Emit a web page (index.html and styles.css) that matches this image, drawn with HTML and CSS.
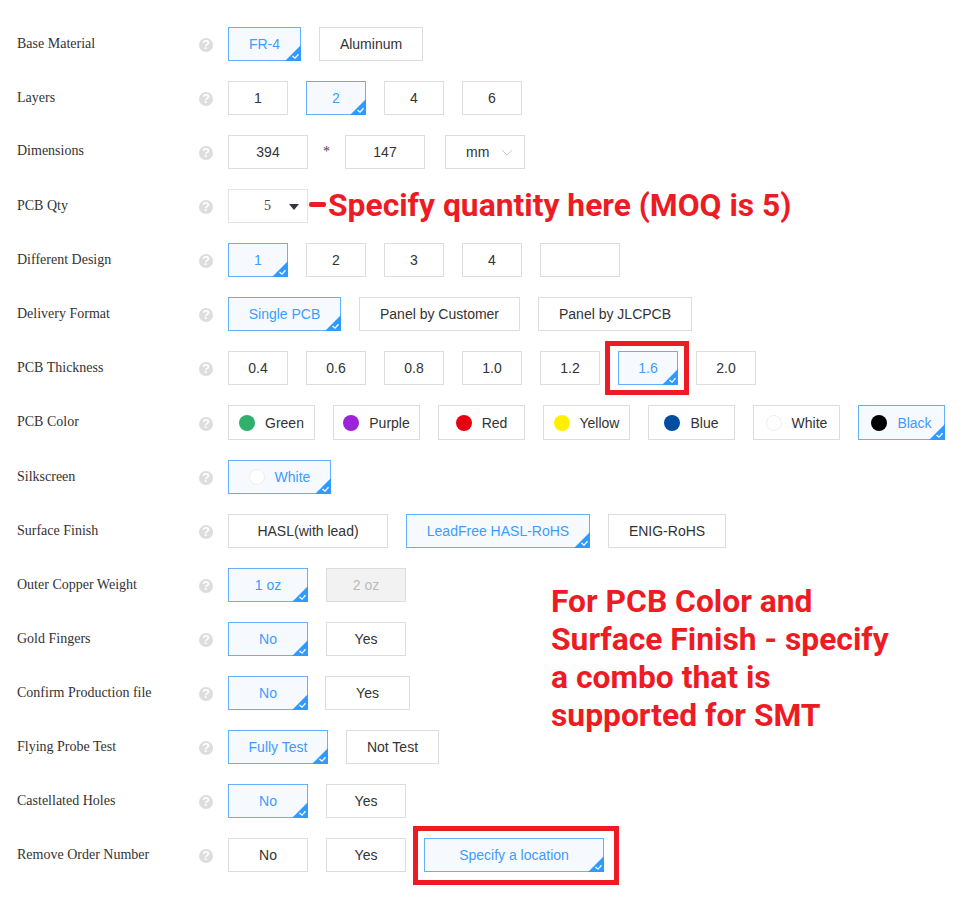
FILE: index.html
```
<!DOCTYPE html>
<html lang="en">
<head>
<meta charset="utf-8">
<title>PCB options</title>
<link rel="stylesheet" href="styles.css">
</head>
<body>
<svg class="defs" width="0" height="0" aria-hidden="true"><defs>
<symbol id="tick" viewBox="0 0 16 16"><polygon points="16,0 16,16 0,16" fill="#2f9bff"/><polyline points="7.5,11 10,13.2 13.5,9.2" fill="none" stroke="#fff" stroke-width="1.3"/></symbol>
</defs></svg>
<main class="form">
  <div class="row"><div class="label">Base Material</div><span class="help">?</span><div class="opts">
    <div class="opt on w73">FR-4<svg class="tick"><use href="#tick"/></svg></div><div class="opt w104">Aluminum</div></div></div>
  <div class="row"><div class="label">Layers</div><span class="help">?</span><div class="opts">
    <div class="opt w60">1</div><div class="opt on w60">2<svg class="tick"><use href="#tick"/></svg></div><div class="opt w60">4</div><div class="opt w60">6</div></div></div>
  <div class="row"><div class="label dim-label">Dimensions</div><span class="help">?</span><div class="opts dims">
    <div class="opt w80">394</div><span class="times">*</span><div class="opt w80">147</div>
    <div class="opt w80 unit">mm<svg class="chev" width="12" height="8" viewBox="0 0 12 8"><polyline points="1,1 6,6 11,1" fill="none" stroke="#c8ccd4" stroke-width="1"/></svg></div></div></div>
  <div class="row"><div class="label">PCB Qty</div><span class="help">?</span><div class="opts">
    <div class="opt w80 qty"><span class="qty-val">5</span><svg class="caret" width="10" height="6" viewBox="0 0 10 6"><polygon points="0,0 10,0 5,6" fill="#2f3542"/></svg></div></div></div>
  <div class="row"><div class="label">Different Design</div><span class="help">?</span><div class="opts">
    <div class="opt on w60">1<svg class="tick"><use href="#tick"/></svg></div><div class="opt w60">2</div><div class="opt w60">3</div><div class="opt w60">4</div><div class="opt w80"></div></div></div>
  <div class="row"><div class="label">Delivery Format</div><span class="help">?</span><div class="opts">
    <div class="opt on w113">Single PCB<svg class="tick"><use href="#tick"/></svg></div><div class="opt w161">Panel by Customer</div><div class="opt w154">Panel by JLCPCB</div></div></div>
  <div class="row"><div class="label">PCB Thickness</div><span class="help">?</span><div class="opts">
    <div class="opt w60">0.4</div><div class="opt w60">0.6</div><div class="opt w60">0.8</div><div class="opt w60">1.0</div><div class="opt w60">1.2</div><div class="opt on w60">1.6<svg class="tick"><use href="#tick"/></svg></div><div class="opt w60">2.0</div></div></div>
  <div class="row row-color"><div class="label">PCB Color</div><span class="help">?</span><div class="opts">
    <div class="opt w87 color"><i class="dot green"></i>Green</div>
    <div class="opt w87 color"><i class="dot purple"></i>Purple</div>
    <div class="opt w87 color"><i class="dot red"></i>Red</div>
    <div class="opt w87 color"><i class="dot yellow"></i>Yellow</div>
    <div class="opt w87 color"><i class="dot blue"></i>Blue</div>
    <div class="opt w87 color"><i class="dot white"></i>White</div>
    <div class="opt on w87 color"><i class="dot black"></i>Black<svg class="tick"><use href="#tick"/></svg></div></div></div>
  <div class="row"><div class="label">Silkscreen</div><span class="help">?</span><div class="opts">
    <div class="opt on w103 color"><i class="dot white"></i>White<svg class="tick"><use href="#tick"/></svg></div></div></div>
  <div class="row"><div class="label">Surface Finish</div><span class="help">?</span><div class="opts">
    <div class="opt w160">HASL(with lead)</div><div class="opt on w184">LeadFree HASL-RoHS<svg class="tick"><use href="#tick"/></svg></div><div class="opt w118">ENIG-RoHS</div></div></div>
  <div class="row"><div class="label">Outer Copper Weight</div><span class="help">?</span><div class="opts">
    <div class="opt on w80">1 oz<svg class="tick"><use href="#tick"/></svg></div><div class="opt off w80">2 oz</div></div></div>
  <div class="row"><div class="label">Gold Fingers</div><span class="help">?</span><div class="opts">
    <div class="opt on w80">No<svg class="tick"><use href="#tick"/></svg></div><div class="opt w80">Yes</div></div></div>
  <div class="row"><div class="label">Confirm Production file</div><span class="help">?</span><div class="opts tight">
    <div class="opt on w80">No<svg class="tick"><use href="#tick"/></svg></div><div class="opt w85">Yes</div></div></div>
  <div class="row"><div class="label">Flying Probe Test</div><span class="help">?</span><div class="opts">
    <div class="opt on w100">Fully Test<svg class="tick"><use href="#tick"/></svg></div><div class="opt w93">Not Test</div></div></div>
  <div class="row"><div class="label">Castellated Holes</div><span class="help">?</span><div class="opts">
    <div class="opt on w80">No<svg class="tick"><use href="#tick"/></svg></div><div class="opt w80">Yes</div></div></div>
  <div class="row"><div class="label">Remove Order Number</div><span class="help">?</span><div class="opts">
    <div class="opt w80">No</div><div class="opt w80">Yes</div><div class="opt on w180">Specify a location<svg class="tick"><use href="#tick"/></svg></div></div></div>
</main>
<div class="note-dash"></div>
<div class="note note-qty">Specify quantity here (MOQ is 5)</div>
<div class="note note-combo">For PCB Color and<br>Surface Finish - specify<br>a combo that is<br>supported for SMT</div>
<div class="mark mark-thick"></div>
<div class="mark mark-loc"></div>
</body>
</html>
```
FILE: styles.css
```
html, body { margin: 0; padding: 0; background: #fff; }
body { position: relative; height: 914px; overflow: hidden; font-family: "Liberation Sans", Arial, sans-serif; font-size: 14px; color: #333; }
.defs { position: absolute; }
.form { display: flex; flex-direction: column; gap: 20px; padding: 27px 0 0 17px; }
.row { display: flex; align-items: center; height: 34px; }
.row-color { height: 35px; }
.label { width: 182px; font-family: "Liberation Serif", "Times New Roman", serif; font-size: 14px; line-height: 16px; color: #333; }
.dim-label { margin-top: -3px; }
.row-color .label { margin-top: -2px; }
.help { width: 14px; height: 14px; margin: 2px 15px 0 0; flex: none; border-radius: 50%; background: #ddd; color: #fff; font-weight: 700; font-size: 13px; line-height: 14px; text-align: center; }
.opts { display: flex; gap: 18px; }
.opts.tight { gap: 17px; }
.opts.dims { gap: 0; }
.opt { position: relative; box-sizing: border-box; height: 34px; flex: none; display: flex; align-items: center; justify-content: center; border: 1px solid #ddd; background: #fff; color: #333; }
.row-color .opt { height: 35px; }
.opt.on { border-color: #64b0ff; background: #f6faff; color: #3c9cff; }
.opt.off { background: #f2f2f2; color: #bbb; }
.tick { position: absolute; right: -1px; bottom: -1px; width: 16px; height: 16px; }
.w60 { width: 60px; } .w73 { width: 73px; } .w80 { width: 80px; } .w85 { width: 85px; } .w87 { width: 87px; }
.w93 { width: 93px; } .w100 { width: 100px; } .w103 { width: 103px; } .w104 { width: 104px; } .w113 { width: 113px; }
.w118 { width: 118px; } .w154 { width: 154px; } .w160 { width: 160px; } .w161 { width: 161px; } .w180 { width: 180px; } .w184 { width: 184px; }
.times { width: 37px; text-align: center; color: #5a3a5a; font-family: "Liberation Serif", serif; font-size: 14px; line-height: 34px; }
.unit { margin-left: 20px; justify-content: flex-start; padding-left: 20px; }
.chev { position: absolute; right: 11px; top: 13px; }
.qty { border-color: #e4e4e4; }
.qty-val { font-family: "Liberation Serif", serif; color: #444; margin-left: -1px; }
.caret { position: absolute; right: 8px; top: 14px; }
.color { gap: 10px; }
.dot { width: 16px; height: 16px; border-radius: 50%; box-sizing: border-box; flex: none; }
.green { background: #2fb06c; }
.purple { background: #9b24d8; }
.red { background: #e60012; }
.yellow { background: #fff000; }
.blue { background: #004ea2; }
.black { background: #000; }
.white { background: #fff; border: 1px solid #eee; }
.note { position: absolute; font-family: Roboto, sans-serif; font-weight: 700; font-size: 31.8px; color: #ed1c24; white-space: nowrap; }
.note-qty { left: 328px; top: 186px; line-height: 38px; }
.note-combo { left: 551px; top: 582px; line-height: 38px; }
.note-dash { position: absolute; left: 309px; top: 202px; width: 17px; height: 5px; background: #ed1c24; border-radius: 2px; }
.mark { position: absolute; box-sizing: border-box; border: 5px solid #ed1c24; }
.mark-thick { left: 605px; top: 341px; width: 84px; height: 54px; }
.mark-loc { left: 413px; top: 826px; width: 206px; height: 59px; }
```
